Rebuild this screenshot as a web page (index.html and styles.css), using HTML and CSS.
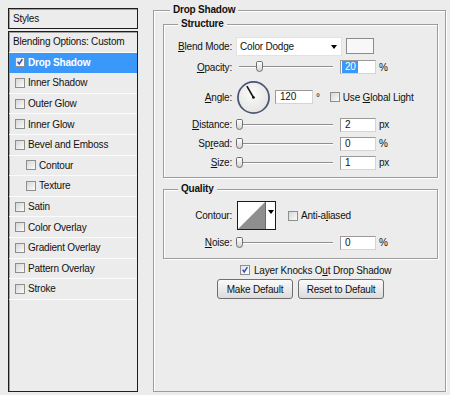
FILE: index.html
```html
<!DOCTYPE html>
<html lang="en">
<head>
    <meta charset="UTF-8">
    <title>Layer Style - Drop Shadow</title>
    <link rel="stylesheet" href="styles.css">
</head>
<body>
    <div class="dialog">
        <div class="styles-panel">
            <div class="panel-head">Styles</div>
            <ul class="style-list">
                <li class="style-item blending">Blending Options: Custom</li>
                <li class="style-item active"><span class="cb checked"><svg viewBox="0 0 10 10"><path d="M2 4.5 L4 7.5 L8 1.5" /></svg></span>Drop Shadow</li>
                <li class="style-item"><span class="cb"></span>Inner Shadow</li>
                <li class="style-item"><span class="cb"></span>Outer Glow</li>
                <li class="style-item"><span class="cb"></span>Inner Glow</li>
                <li class="style-item"><span class="cb"></span>Bevel and Emboss</li>
                <li class="style-item sub"><span class="cb"></span>Contour</li>
                <li class="style-item sub"><span class="cb"></span>Texture</li>
                <li class="style-item"><span class="cb"></span>Satin</li>
                <li class="style-item"><span class="cb"></span>Color Overlay</li>
                <li class="style-item"><span class="cb"></span>Gradient Overlay</li>
                <li class="style-item"><span class="cb"></span>Pattern Overlay</li>
                <li class="style-item"><span class="cb"></span>Stroke</li>
            </ul>
        </div>

        <div class="group effect-group">
            <div class="group-title">Drop Shadow</div>

            <div class="group structure">
                <div class="group-title">Structure</div>
                <div class="group-body">
                    <div class="field-row row-blend">
                        <span class="field-label"><u>B</u>lend Mode:</span>
                        <div class="select">Color Dodge<span class="arrow"></span></div>
                        <span class="swatch"></span>
                    </div>
                    <div class="field-row row-opacity">
                        <span class="field-label"><u>O</u>pacity:</span>
                        <div class="slider"><span class="thumb" style="left: 20px"></span></div>
                        <div class="num"><span class="sel">20</span></div>
                        <span class="unit">%</span>
                    </div>
                    <div class="field-row row-angle">
                        <span class="field-label"><u>A</u>ngle:</span>
                        <svg class="dial" viewBox="0 0 36 36">
                            <defs>
                                <radialGradient id="dialFill" cx="0.45" cy="0.4" r="0.6">
                                    <stop offset="0" stop-color="#fbfbfa"/>
                                    <stop offset="1" stop-color="#e4e4e2"/>
                                </radialGradient>
                            </defs>
                            <circle cx="18" cy="18" r="16" fill="url(#dialFill)" stroke="#4a5573" stroke-width="1.8"/>
                            <line x1="18" y1="18" x2="11.2" y2="6.3" stroke="#111" stroke-width="1.6"/>
                            <circle cx="18" cy="18" r="1.4" fill="#111"/>
                        </svg>
                        <div class="num angle-num">120</div>
                        <span class="unit">&deg;</span>
                        <span class="cb global-cb"></span>
                        <span class="cb-text">Use <u>G</u>lobal Light</span>
                    </div>
                    <div class="field-row">
                        <span class="field-label"><u>D</u>istance:</span>
                        <div class="slider"><span class="thumb" style="left: 0px"></span></div>
                        <div class="num">2</div>
                        <span class="unit">px</span>
                    </div>
                    <div class="field-row">
                        <span class="field-label">Sp<u>r</u>ead:</span>
                        <div class="slider"><span class="thumb" style="left: 0px"></span></div>
                        <div class="num">0</div>
                        <span class="unit">%</span>
                    </div>
                    <div class="field-row">
                        <span class="field-label"><u>S</u>ize:</span>
                        <div class="slider"><span class="thumb" style="left: 0px"></span></div>
                        <div class="num">1</div>
                        <span class="unit">px</span>
                    </div>
                </div>
            </div>

            <div class="group quality">
                <div class="group-title">Quality</div>
                <div class="group-body">
                    <div class="field-row row-contour">
                        <span class="field-label">Contour:</span>
                        <div class="contour">
                            <svg class="contour-curve" viewBox="0 0 27 26" preserveAspectRatio="none">
                                <rect width="27" height="26" fill="#fff"/>
                                <polygon points="0,26 27,0 27,26" fill="#8f8f8f"/>
                            </svg>
                            <span class="contour-drop"><span class="arrow"></span></span>
                        </div>
                        <span class="cb aa-cb"></span>
                        <span class="cb-text">Anti-a<u>l</u>iased</span>
                    </div>
                    <div class="field-row row-noise">
                        <span class="field-label"><u>N</u>oise:</span>
                        <div class="slider"><span class="thumb" style="left: 0px"></span></div>
                        <div class="num">0</div>
                        <span class="unit">%</span>
                    </div>
                </div>
            </div>

            <div class="knockout-row">
                <span class="cb checked"><svg viewBox="0 0 10 10"><path d="M2 4.5 L4 7.5 L8 1.5" /></svg></span>
                <span class="cb-text">Layer Knocks O<u>u</u>t Drop Shadow</span>
            </div>

            <div class="button-row">
                <button class="btn btn-make">Make Default</button>
                <button class="btn btn-reset">Reset to Default</button>
            </div>
        </div>
    </div>
</body>
</html>
```

FILE: styles.css
```css
body {
    margin: 0;
    background: #ececec;
    font-family: 'Liberation Sans', Arial, sans-serif;
    font-size: 10px;
    letter-spacing: -0.2px;
    color: #111;
}

.dialog {
    display: flex;
    align-items: flex-start;
    gap: 15px;
    padding: 8px 0 0 8px;
}

/* left column: list of layer styles */
.styles-panel {
    width: 130px;
    display: flex;
    flex-direction: column;
    gap: 2px;
}

.panel-head {
    height: 21px;
    box-sizing: border-box;
    border: 1px solid #1e1e1e;
    box-shadow: inset 1px 1px 0 #a0a0a0;
    padding-left: 4px;
    line-height: 19px;
}

.style-list {
    list-style: none;
    margin: 0;
    padding: 0;
    height: 361px;
    box-sizing: border-box;
    border: 1px solid #1e1e1e;
    box-shadow: inset 1px 1px 0 #a0a0a0;
}

.style-item {
    height: 20.6px;
    box-sizing: border-box;
    border-bottom: 1px solid #fbfbfb;
    display: flex;
    align-items: center;
    gap: 3px;
    padding-left: 6px;
}

.style-item.blending {
    padding-left: 4px;
}

.style-item.sub {
    padding-left: 17px;
}

.style-item.active {
    background: #3b98fb;
    color: #fff;
    font-weight: bold;
    border-bottom-color: #3b98fb;
}

/* checkboxes */
.cb {
    width: 10px;
    height: 10px;
    box-sizing: border-box;
    border: 1px solid #8d8e8e;
    background: linear-gradient(135deg, #d6d6d6, #fbfbfb);
    flex-shrink: 0;
    display: inline-block;
}

.cb.checked {
    background: linear-gradient(135deg, #e4e4e4, #ffffff);
}

.cb svg {
    display: block;
    width: 8px;
    height: 8px;
}

.cb svg path {
    fill: none;
    stroke: #2a4cbf;
    stroke-width: 1.8;
}

.cb-text {
    margin-left: 3px;
    white-space: nowrap;
}

/* etched group boxes */
.group {
    box-sizing: border-box;
    border: 1px solid #9c9c9c;
    box-shadow: inset 1px 1px 0 #fff, 1px 1px 0 #fff;
}

.group-title {
    display: block;
    width: fit-content;
    margin: -7px 0 0 16px;
    padding: 0 3px;
    background: #ececec;
    font-weight: bold;
    line-height: 12px;
}

.effect-group {
    width: 293px;
    height: 382px;
    margin-top: 2px;
}

.structure {
    width: 275px;
    margin: 8px 0 0 9px;
}

.structure .group-title,
.quality .group-title {
    margin-left: 14px;
}

.quality {
    width: 275px;
    margin: 11px 0 0 9px;
}

.group-body {
    padding: 6px 0 5px 0;
}

.quality .group-body {
    padding: 5px 0 6px 0;
}

.field-row {
    display: flex;
    align-items: center;
    height: 19px;
}

.row-blend {
    height: 20px;
}

.row-opacity {
    height: 18px;
    margin-top: 2px;
}

.row-angle {
    height: 36px;
    margin-top: 3px;
}

.row-contour {
    height: 31px;
}

.row-noise {
    margin-top: 2px;
}

.field-label {
    width: 68px;
    margin-right: 4px;
    text-align: right;
    flex-shrink: 0;
    white-space: nowrap;
}

/* blend mode dropdown */
.select {
    position: relative;
    width: 106px;
    height: 19px;
    box-sizing: border-box;
    background: #fff;
    border: 1px solid #e2e2e2;
    padding-left: 3px;
    line-height: 17px;
}

.arrow {
    display: inline-block;
    width: 0;
    height: 0;
    border-left: 3.5px solid transparent;
    border-right: 3.5px solid transparent;
    border-top: 4px solid #000;
}

.select .arrow {
    position: absolute;
    right: 4px;
    top: 7px;
}

.swatch {
    width: 28px;
    height: 16px;
    box-sizing: border-box;
    margin-left: 4px;
    border: 1px solid #8b8b8b;
    background: #f8f8f8;
}

/* sliders */
.slider {
    position: relative;
    width: 97px;
    height: 12px;
    margin-right: 7px;
    flex-shrink: 0;
}

.slider::before {
    content: "";
    position: absolute;
    left: 3px;
    right: 0;
    top: 5px;
    height: 1px;
    background: #8f8f8f;
    border-bottom: 1px solid #fff;
}

.thumb {
    position: absolute;
    top: 0;
    width: 7px;
    height: 11px;
    box-sizing: border-box;
    border: 1px solid #6e6e6e;
    border-radius: 2px 2px 4px 4px;
    background: linear-gradient(#ffffff, #d4d4d4);
}

/* number fields */
.num {
    width: 36px;
    height: 14px;
    box-sizing: border-box;
    background: #fff;
    border: 1px solid #d4d4d4;
    border-top-color: #9a9a9a;
    border-left-color: #9a9a9a;
    padding-left: 4px;
    line-height: 12px;
    flex-shrink: 0;
}

.num .sel {
    display: inline-block;
    margin-left: -3px;
    padding: 0 2px 0 3px;
    background: #3b98fb;
    color: #fff;
}

.unit {
    margin-left: 3px;
}

.dial {
    width: 35px;
    height: 35px;
    margin-right: 4px;
    flex-shrink: 0;
}

.angle-num {
    width: 38px;
}

.global-cb {
    margin-left: 10px;
}

/* contour picker */
.contour {
    display: flex;
    width: 39px;
    height: 29px;
    box-sizing: border-box;
    border: 1px solid #1c1c1c;
    margin-left: 1px;
}

.contour-curve {
    width: 27px;
    height: 27px;
    display: block;
}

.contour-drop {
    flex: 1;
    background: #fff;
    border-left: 1px solid #6a6a6a;
    display: flex;
    justify-content: center;
    padding-top: 8px;
    box-sizing: border-box;
}

.aa-cb {
    margin-left: 12px;
}

/* bottom controls */
.knockout-row {
    display: flex;
    align-items: center;
    height: 14px;
    margin: 4px 0 0 86px;
}

.knockout-row .cb-text {
    margin-left: 4px;
}

.button-row {
    display: flex;
    gap: 5px;
    margin: 2px 0 0 63px;
}

.btn {
    height: 20px;
    box-sizing: border-box;
    padding: 0;
    border: 1px solid #6f6f6f;
    border-radius: 3px;
    background: linear-gradient(#fafafa, #dcdcdc);
    font-family: 'Liberation Sans', Arial, sans-serif;
    font-size: 10px;
    letter-spacing: -0.2px;
    color: #111;
}

.btn-make {
    width: 76px;
}

.btn-reset {
    width: 86px;
}
```
